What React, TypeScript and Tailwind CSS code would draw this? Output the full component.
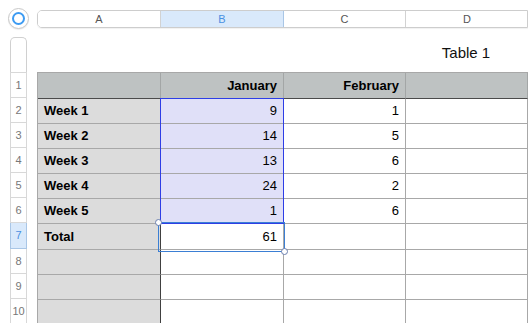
import React from "react";

const cols = ["A", "B", "C", "D"];

type Row = { label: string; jan: string; feb: string; num: number; h: string };

const rows: Row[] = [
  { num: 2, label: "Week 1", jan: "9", feb: "1", h: "h-[25px]" },
  { num: 3, label: "Week 2", jan: "14", feb: "5", h: "h-[25px]" },
  { num: 4, label: "Week 3", jan: "13", feb: "6", h: "h-[25px]" },
  { num: 5, label: "Week 4", jan: "24", feb: "2", h: "h-[25px]" },
  { num: 6, label: "Week 5", jan: "1", feb: "6", h: "h-[25px]" },
  { num: 7, label: "Total", jan: "61", feb: "", h: "h-[26px]" },
  { num: 8, label: "", jan: "", feb: "", h: "h-[25px]" },
  { num: 9, label: "", jan: "", feb: "", h: "h-[25px]" },
  { num: 10, label: "", jan: "", feb: "", h: "h-[25px]" },
];

const grid = "grid grid-cols-[123px_123px_122px_122px]";

export default function App() {
  return (
    <div
      className="w-[528px] h-[323px] overflow-hidden bg-white text-black"
      style={{ fontFamily: '"Liberation Sans", Arial, sans-serif' }}
    >
      {/* top strip: select-all button + column letters */}
      <div className="flex h-[37px] items-start">
        <div className="w-[37px] flex justify-center pt-[8px]">
          <div className="w-[21px] h-[21px] rounded-full border border-[#c8c8c8] bg-white flex items-center justify-center shadow-[0_1px_1px_rgba(0,0,0,0.08)]">
            <div className="w-[13px] h-[13px] rounded-full border-2 border-[#3d9bf2]" />
          </div>
        </div>
        <div
          className={`${grid} mt-[10px] h-[18px] border border-[#cdcdcd] rounded-l-[5px] overflow-hidden shadow-[0_1px_1px_rgba(0,0,0,0.06)]`}
        >
          {cols.map((c) => (
            <div
              key={c}
              className={`flex items-center justify-center text-[11px] border-r ${
                c === "B"
                  ? "bg-[#d9e9fb] text-[#4a90e2] border-[#a9c6e6]"
                  : "bg-white text-[#555] border-[#d2d2d2]"
              } ${c === "D" ? "border-r-0" : ""}`}
            >
              {c}
            </div>
          ))}
        </div>
      </div>

      <div className="flex">
        {/* row numbers */}
        <div className="ml-[10px] w-[17px] flex flex-col">
          <div className="h-[35px] border border-b-0 border-[#d0d0d0] rounded-t-[5px]" />
          <div className="h-[26px] border border-[#d8d8d8] flex items-center justify-center text-[11px] text-[#777]">
            1
          </div>
          {rows.map((r) => (
            <div
              key={r.num}
              className={`${r.h} border border-t-0 flex items-center justify-center text-[11px] ${
                r.num === 7
                  ? "bg-[#d9e9fb] text-[#4a90e2] border-[#a9c6e6]"
                  : "border-[#d8d8d8] text-[#777]"
              }`}
            >
              {r.num}
            </div>
          ))}
        </div>

        <div className="ml-[10px] flex flex-col">
          {/* table title */}
          <div className={`${grid} h-[35px]`}>
            <div />
            <div />
            <div />
            <div className="flex items-center justify-center text-[15px] text-[#111] pb-[2px]">
              Table 1
            </div>
          </div>

          {/* table body */}
          <div className="relative border-t border-l border-[#a8a8a8]">
            <div className={`${grid} h-[26px]`}>
              <div className="bg-[#bec2c2] border-r border-b border-r-[#a3a6a6] border-b-[#4b4b4b]" />
              <div className="bg-[#bec2c2] border-r border-b border-r-[#a3a6a6] border-b-[#4b4b4b] flex items-center justify-end pr-[6px] text-[13px] font-bold">
                January
              </div>
              <div className="bg-[#bec2c2] border-r border-b border-r-[#a3a6a6] border-b-[#4b4b4b] flex items-center justify-end pr-[6px] text-[13px] font-bold">
                February
              </div>
              <div className="bg-[#bec2c2] border-r border-b border-r-[#a3a6a6] border-b-[#4b4b4b]" />
            </div>
            {rows.map((r) => {
              const sel = r.num >= 2 && r.num <= 6;
              return (
                <div key={r.num} className={`${grid} ${r.h}`}>
                  <div className="bg-[#dcdcdc] border-r border-b border-r-[#404040] border-b-[#a8a8a8] flex items-center pl-[6px] text-[13px] font-bold">
                    {r.label}
                  </div>
                  <div
                    className={`${
                      sel ? "bg-[#e0e0f8]" : "bg-white"
                    } border-r border-b border-[#a8a8a8] flex items-center justify-end pr-[6px] text-[13px]`}
                  >
                    {r.jan}
                  </div>
                  <div className="bg-white border-r border-b border-[#a8a8a8] flex items-center justify-end pr-[6px] text-[13px]">
                    {r.feb}
                  </div>
                  <div className="bg-white border-r border-b border-[#a8a8a8]" />
                </div>
              );
            })}

            {/* selected range B2:B6 */}
            <div className="absolute left-[122px] top-[25px] w-[124px] h-[126px] border border-[#2e3ee6] pointer-events-none" />

            {/* active cell B7 */}
            <div className="absolute left-[120px] top-[149px] w-[127px] h-[30px] border border-[#3b7fd4] pointer-events-none">
              <div className="absolute -left-[4px] -top-[4px] w-[7px] h-[7px] rounded-full bg-white border border-[#6b7fae]" />
              <div className="absolute -right-[4px] -bottom-[4px] w-[7px] h-[7px] rounded-full bg-white border border-[#6b7fae]" />
            </div>
          </div>
        </div>
      </div>
    </div>
  );
}
